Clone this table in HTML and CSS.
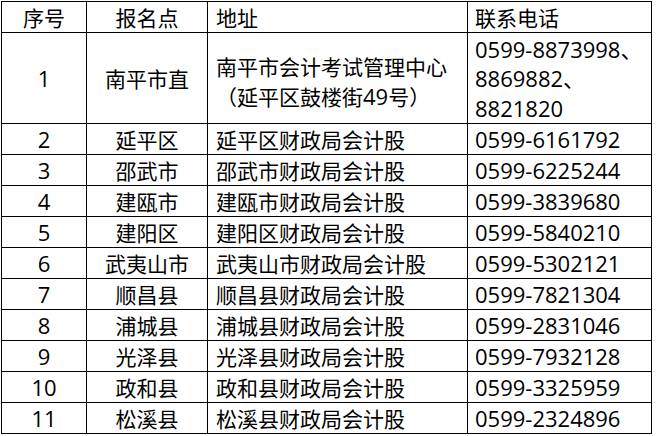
FILE: index.html
```html
<!DOCTYPE html>
<html lang="zh-CN">
<head>
<meta charset="utf-8">
<title>报名点</title>
<link rel="stylesheet" href="styles.css">
</head>
<body>
<div class="sheet">
  <div class="cell mid">序号</div>
  <div class="cell mid">报名点</div>
  <div class="cell left">地址</div>
  <div class="cell tel">联系电话</div>

  <div class="cell mid"><span class="num">1</span></div>
  <div class="cell mid">南平市直</div>
  <div class="cell left addr"><div class="lines">南平市会计考试管理中心<br><span class="paren">（</span>延平区鼓楼街<span class="num">49</span>号<span class="paren">）</span></div></div>
  <div class="cell tel phones"><div class="lines num">0599-8873998、<br>8869882、<br>8821820</div></div>

  <div class="cell mid"><span class="num">2</span></div>
  <div class="cell mid">延平区</div>
  <div class="cell left">延平区财政局会计股</div>
  <div class="cell tel"><span class="num">0599-6161792</span></div>

  <div class="cell mid"><span class="num">3</span></div>
  <div class="cell mid">邵武市</div>
  <div class="cell left">邵武市财政局会计股</div>
  <div class="cell tel"><span class="num">0599-6225244</span></div>

  <div class="cell mid"><span class="num">4</span></div>
  <div class="cell mid">建瓯市</div>
  <div class="cell left">建瓯市财政局会计股</div>
  <div class="cell tel"><span class="num">0599-3839680</span></div>

  <div class="cell mid"><span class="num">5</span></div>
  <div class="cell mid">建阳区</div>
  <div class="cell left">建阳区财政局会计股</div>
  <div class="cell tel"><span class="num">0599-5840210</span></div>

  <div class="cell mid"><span class="num">6</span></div>
  <div class="cell mid">武夷山市</div>
  <div class="cell left">武夷山市财政局会计股</div>
  <div class="cell tel"><span class="num">0599-5302121</span></div>

  <div class="cell mid"><span class="num">7</span></div>
  <div class="cell mid">顺昌县</div>
  <div class="cell left">顺昌县财政局会计股</div>
  <div class="cell tel"><span class="num">0599-7821304</span></div>

  <div class="cell mid"><span class="num">8</span></div>
  <div class="cell mid">浦城县</div>
  <div class="cell left">浦城县财政局会计股</div>
  <div class="cell tel"><span class="num">0599-2831046</span></div>

  <div class="cell mid"><span class="num">9</span></div>
  <div class="cell mid">光泽县</div>
  <div class="cell left">光泽县财政局会计股</div>
  <div class="cell tel"><span class="num">0599-7932128</span></div>

  <div class="cell mid"><span class="num">10</span></div>
  <div class="cell mid">政和县</div>
  <div class="cell left">政和县财政局会计股</div>
  <div class="cell tel"><span class="num">0599-3325959</span></div>

  <div class="cell mid"><span class="num">11</span></div>
  <div class="cell mid">松溪县</div>
  <div class="cell left">松溪县财政局会计股</div>
  <div class="cell tel"><span class="num">0599-2324896</span></div>
</div>
</body>
</html>
```

FILE: styles.css
```css
html, body {
  margin: 0;
  padding: 0;
  background: #ffffff;
}

.sheet {
  display: grid;
  grid-template-columns: 84px 120px 259px 183px;
  grid-template-rows: 30px 90px repeat(10, 30px);
  gap: 1px;
  padding: 1px;
  background: #000000;
  width: max-content;
  margin: 1px 0 0 1px;
}

.cell {
  background: #ffffff;
  display: flex;
  align-items: center;
  font-family: "Noto Sans CJK SC", sans-serif;
  font-size: 21px;
  line-height: 30px;
  color: #000000;
  white-space: nowrap;
  text-spacing-trim: space-all;
}

.mid {
  justify-content: center;
}

.left {
  padding-left: 8px;
}

.tel {
  padding-left: 7px;
}

.addr {
  padding-top: 6px;
}

.phones {
  padding-top: 2px;
  line-height: 29.5px;
}

.num {
  font-family: "Open Sans", "Noto Sans CJK SC", sans-serif;
  font-size: 22px;
}

.paren {
  font-family: "Noto Sans CJK TC", "Noto Sans CJK SC", sans-serif;
}
```
